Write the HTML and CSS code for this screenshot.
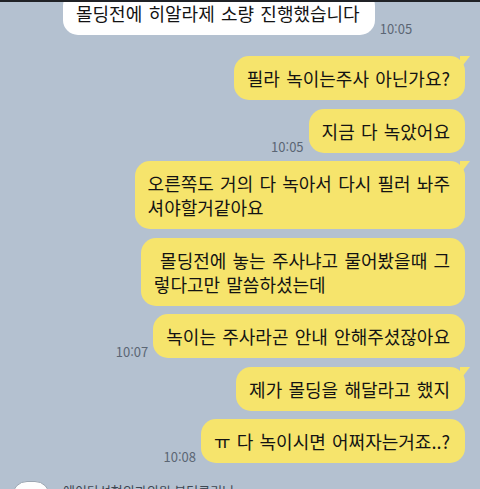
FILE: index.html
```html
<!DOCTYPE html>
<html lang="ko">
<head>
    <meta charset="UTF-8">
    <meta name="viewport" content="width=device-width, initial-scale=1.0">
    <title>채팅</title>
    <link rel="stylesheet" href="styles.css">
</head>
<body>

    <!-- top edge of the screen -->
    <div class="topbar"></div>

    <main class="chat">
        <!-- received (continued from above) -->
        <div class="group in">
            <div class="avatar-space"></div>
            <div class="msgs">
                <div class="row">
                    <div class="bubble white">몰딩전에 히알라제 소량 진행했습니다</div>
                    <span class="time">10:05</span>
                </div>
            </div>
        </div>

        <!-- sent -->
        <div class="group out">
            <div class="row">
                <div class="bubble yellow tail">필라 녹이는주사 아닌가요?</div>
            </div>
            <div class="row">
                <span class="time">10:05</span>
                <div class="bubble yellow">지금 다 녹았어요</div>
            </div>
            <div class="row">
                <div class="bubble yellow tail">오른쪽도 거의 다 녹아서 다시 필러 놔주<br>셔야할거같아요</div>
            </div>
            <div class="row">
                <div class="bubble yellow">&nbsp;몰딩전에 놓는 주사냐고 물어봤을때 그<br>렇다고만 말씀하셨는데</div>
            </div>
            <div class="row">
                <span class="time">10:07</span>
                <div class="bubble yellow">녹이는 주사라곤 안내 안해주셨잖아요</div>
            </div>
            <div class="row">
                <div class="bubble yellow tail">제가 몰딩을 해달라고 했지</div>
            </div>
            <div class="row">
                <span class="time">10:08</span>
                <div class="bubble yellow">ㅠ 다 녹이시면 어쩌자는거죠..?</div>
            </div>
        </div>

        <!-- received -->
        <div class="group in">
            <div class="avatar"></div>
            <div class="msgs">
                <div class="name">에이닷성형외과의원 본더클리닉</div>
            </div>
        </div>
    </main>

</body>
</html>
```

FILE: styles.css
```css
/* General styles */
* {
    box-sizing: border-box;
    margin: 0;
    padding: 0;
}

body {
    font-family: "Noto Sans CJK KR", "Noto Sans", sans-serif;
    background: #b4c1d0;
    color: #222;
    height: 489px;
    overflow: hidden;
}

.topbar {
    position: fixed;
    top: 0;
    left: 0;
    width: 100%;
    height: 2px;
    background: #202226;
    z-index: 2;
}

/* Chat list */
.chat {
    display: flex;
    flex-direction: column;
    margin-top: -9px;
    padding: 0 15px 0 12px;
}

.group {
    display: flex;
}

.group.in {
    gap: 13px;
}

.group.out {
    flex-direction: column;
    gap: 8.5px;
    margin: 21px 0 18px;
}

.avatar-space {
    width: 38px;
    flex-shrink: 0;
}

.avatar {
    width: 38px;
    height: 38px;
    flex-shrink: 0;
    background: #fdfdfd;
    border: 1px solid #9ba6b2;
    border-radius: 15px;
}

.msgs {
    display: flex;
    flex-direction: column;
}

.row {
    display: flex;
    align-items: flex-end;
    gap: 5px;
}

.group.out .row {
    justify-content: flex-end;
}

.name {
    font-size: 13px;
    line-height: 16px;
    color: #3e4752;
    padding-top: 2px;
}

/* Bubbles */
.bubble {
    position: relative;
    padding: 10px 15px 10px 13px;
    border-radius: 15px;
    font-size: 18px;
    line-height: 24px;
    word-spacing: 1.2px;
    white-space: nowrap;
    color: #131313;
}

.bubble.white {
    background: #fff;
}

.bubble.yellow {
    background: #f6e46c;
}

.bubble.tail::after {
    content: "";
    position: absolute;
    top: 0;
    right: -5px;
    width: 0;
    height: 0;
    border-top: 13px solid #f6e46c;
    border-right: 10px solid transparent;
}

.time {
    font-size: 13px;
    line-height: 1;
    color: #5b6674;
    white-space: nowrap;
}
```
